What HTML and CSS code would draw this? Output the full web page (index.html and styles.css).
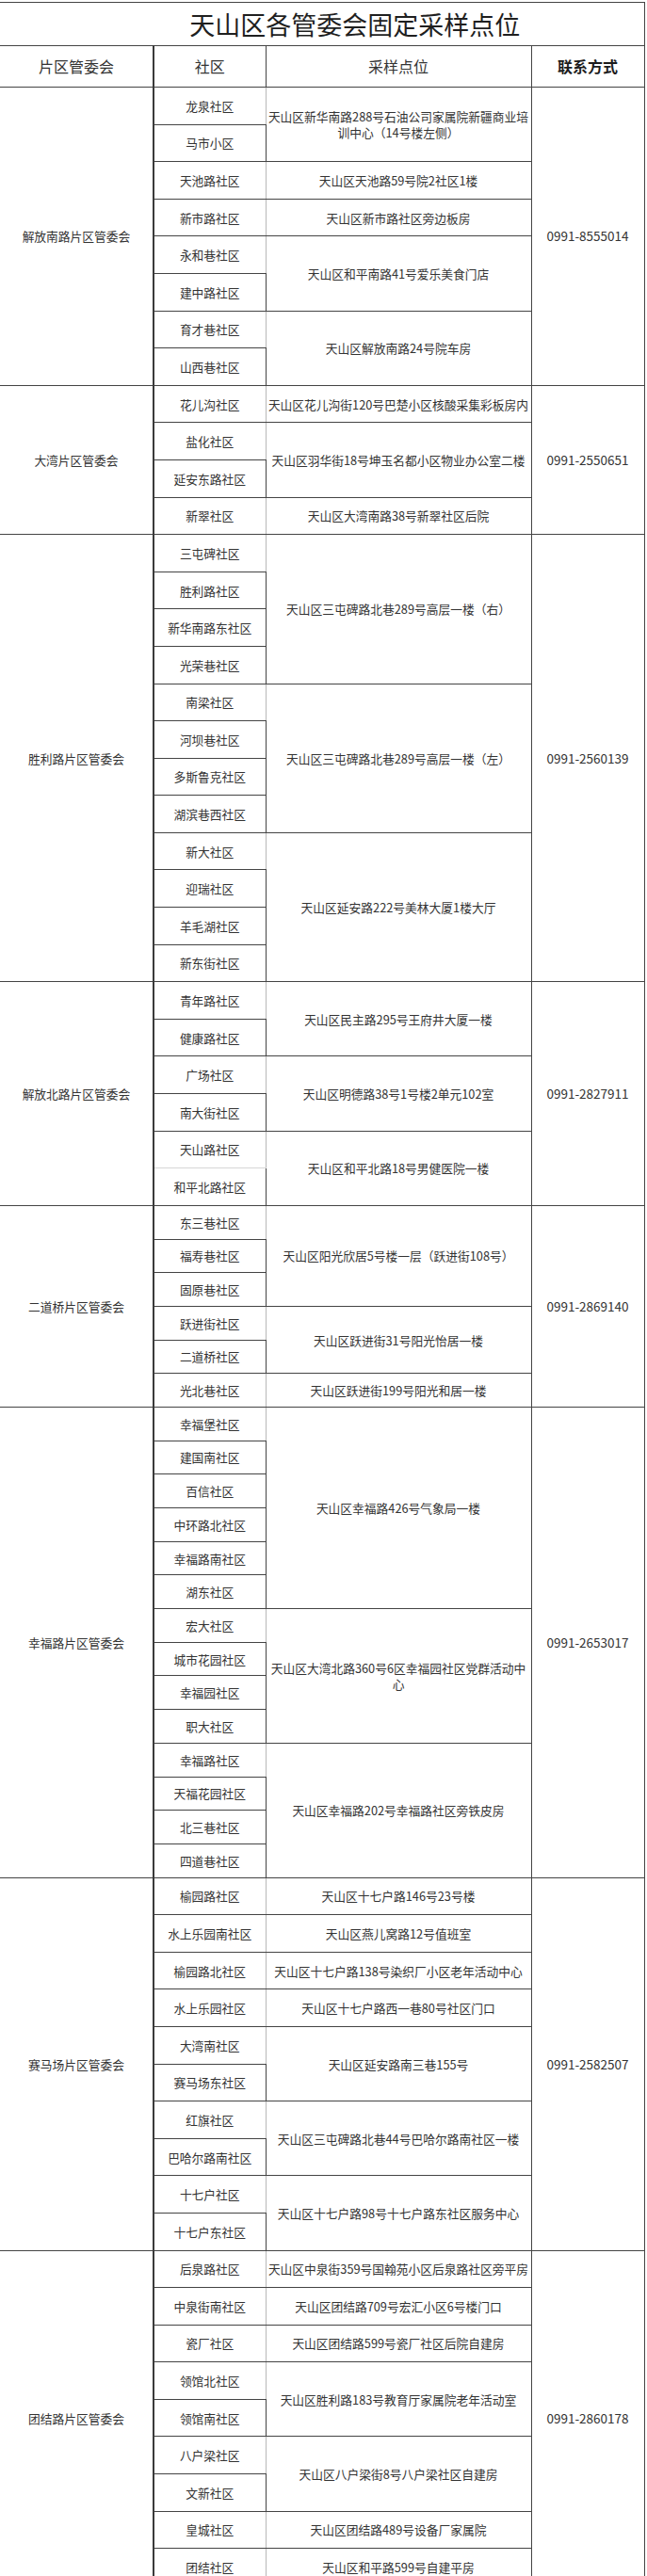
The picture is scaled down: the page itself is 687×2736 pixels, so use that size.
FILE: index.html
```html
<!DOCTYPE html>
<html lang="zh-CN">
<head>
<meta charset="utf-8">
<title>天山区各管委会固定采样点位</title>
<link rel="stylesheet" href="styles.css">
</head>
<body>
<table class="sheet">
  <colgroup>
    <col class="c-area"><col class="c-comm"><col class="c-site"><col class="c-tel">
  </colgroup>
  <thead>
    <tr class="title-row"><th colspan="4" class="title">天山区各管委会固定采样点位</th></tr>
    <tr class="head-row"><th class="area">片区管委会</th><th>社区</th><th>采样点位</th><th class="tel-h">联系方式</th></tr>
  </thead>

  <tbody class="grp">
    <tr class="r"><td class="area" rowspan="8">解放南路片区管委会</td><td class="comm">龙泉社区</td><td class="site" rowspan="2">天山区新华南路288号石油公司家属院新疆商业培训中心（14号楼左侧）</td><td class="tel" rowspan="8">0991-8555014</td></tr>
    <tr class="r"><td class="comm">马市小区</td></tr>
    <tr class="r"><td class="comm">天池路社区</td><td class="site">天山区天池路59号院2社区1楼</td></tr>
    <tr class="r"><td class="comm">新市路社区</td><td class="site">天山区新市路社区旁边板房</td></tr>
    <tr class="r"><td class="comm">永和巷社区</td><td class="site" rowspan="2">天山区和平南路41号爱乐美食门店</td></tr>
    <tr class="r"><td class="comm">建中路社区</td></tr>
    <tr class="r"><td class="comm">育才巷社区</td><td class="site" rowspan="2">天山区解放南路24号院车房</td></tr>
    <tr class="r"><td class="comm">山西巷社区</td></tr>
  </tbody>

  <tbody class="grp">
    <tr class="r"><td class="area" rowspan="4">大湾片区管委会</td><td class="comm">花儿沟社区</td><td class="site">天山区花儿沟街120号巴楚小区核酸采集彩板房内</td><td class="tel" rowspan="4">0991-2550651</td></tr>
    <tr class="r"><td class="comm">盐化社区</td><td class="site" rowspan="2">天山区羽华街18号坤玉名都小区物业办公室二楼</td></tr>
    <tr class="r"><td class="comm">延安东路社区</td></tr>
    <tr class="r"><td class="comm">新翠社区</td><td class="site">天山区大湾南路38号新翠社区后院</td></tr>
  </tbody>

  <tbody class="grp">
    <tr class="r"><td class="area" rowspan="12">胜利路片区管委会</td><td class="comm">三屯碑社区</td><td class="site" rowspan="4">天山区三屯碑路北巷289号高层一楼（右）</td><td class="tel" rowspan="12">0991-2560139</td></tr>
    <tr class="r"><td class="comm">胜利路社区</td></tr>
    <tr class="r"><td class="comm">新华南路东社区</td></tr>
    <tr class="r"><td class="comm">光荣巷社区</td></tr>
    <tr class="r"><td class="comm">南梁社区</td><td class="site" rowspan="4">天山区三屯碑路北巷289号高层一楼（左）</td></tr>
    <tr class="r"><td class="comm">河坝巷社区</td></tr>
    <tr class="r"><td class="comm">多斯鲁克社区</td></tr>
    <tr class="r"><td class="comm">湖滨巷西社区</td></tr>
    <tr class="r"><td class="comm">新大社区</td><td class="site" rowspan="4">天山区延安路222号美林大厦1楼大厅</td></tr>
    <tr class="r"><td class="comm">迎瑞社区</td></tr>
    <tr class="r"><td class="comm">羊毛湖社区</td></tr>
    <tr class="r"><td class="comm">新东街社区</td></tr>
  </tbody>

  <tbody class="grp">
    <tr class="r"><td class="area" rowspan="6">解放北路片区管委会</td><td class="comm">青年路社区</td><td class="site" rowspan="2">天山区民主路295号王府井大厦一楼</td><td class="tel" rowspan="6">0991-2827911</td></tr>
    <tr class="r"><td class="comm">健康路社区</td></tr>
    <tr class="r"><td class="comm">广场社区</td><td class="site" rowspan="2">天山区明德路38号1号楼2单元102室</td></tr>
    <tr class="r"><td class="comm">南大街社区</td></tr>
    <tr class="r"><td class="comm faint-b">天山路社区</td><td class="site" rowspan="2">天山区和平北路18号男健医院一楼</td></tr>
    <tr class="r"><td class="comm">和平北路社区</td></tr>
  </tbody>

  <tbody class="grp">
    <tr class="s"><td class="area" rowspan="6">二道桥片区管委会</td><td class="comm">东三巷社区</td><td class="site" rowspan="3">天山区阳光欣居5号楼一层（跃进街108号）</td><td class="tel" rowspan="6">0991-2869140</td></tr>
    <tr class="s"><td class="comm">福寿巷社区</td></tr>
    <tr class="s"><td class="comm">固原巷社区</td></tr>
    <tr class="s"><td class="comm">跃进街社区</td><td class="site" rowspan="2">天山区跃进街31号阳光怡居一楼</td></tr>
    <tr class="s"><td class="comm">二道桥社区</td></tr>
    <tr class="s"><td class="comm">光北巷社区</td><td class="site">天山区跃进街199号阳光和居一楼</td></tr>
  </tbody>

  <tbody class="grp">
    <tr class="s"><td class="area" rowspan="14">幸福路片区管委会</td><td class="comm">幸福堡社区</td><td class="site" rowspan="6">天山区幸福路426号气象局一楼</td><td class="tel" rowspan="14">0991-2653017</td></tr>
    <tr class="s"><td class="comm">建国南社区</td></tr>
    <tr class="s"><td class="comm">百信社区</td></tr>
    <tr class="s"><td class="comm">中环路北社区</td></tr>
    <tr class="s"><td class="comm">幸福路南社区</td></tr>
    <tr class="s"><td class="comm">湖东社区</td></tr>
    <tr class="s"><td class="comm">宏大社区</td><td class="site" rowspan="4">天山区大湾北路360号6区幸福园社区党群活动中心</td></tr>
    <tr class="s"><td class="comm">城市花园社区</td></tr>
    <tr class="s"><td class="comm">幸福园社区</td></tr>
    <tr class="s"><td class="comm">职大社区</td></tr>
    <tr class="s"><td class="comm">幸福路社区</td><td class="site" rowspan="4">天山区幸福路202号幸福路社区旁铁皮房</td></tr>
    <tr class="s"><td class="comm">天福花园社区</td></tr>
    <tr class="s"><td class="comm">北三巷社区</td></tr>
    <tr class="s"><td class="comm">四道巷社区</td></tr>
  </tbody>

  <tbody class="grp">
    <tr class="r"><td class="area" rowspan="10">赛马场片区管委会</td><td class="comm">榆园路社区</td><td class="site">天山区十七户路146号23号楼</td><td class="tel" rowspan="10">0991-2582507</td></tr>
    <tr class="r"><td class="comm">水上乐园南社区</td><td class="site">天山区燕儿窝路12号值班室</td></tr>
    <tr class="r"><td class="comm">榆园路北社区</td><td class="site">天山区十七户路138号染织厂小区老年活动中心</td></tr>
    <tr class="r"><td class="comm">水上乐园社区</td><td class="site">天山区十七户路西一巷80号社区门口</td></tr>
    <tr class="r"><td class="comm">大湾南社区</td><td class="site" rowspan="2">天山区延安路南三巷155号</td></tr>
    <tr class="r"><td class="comm">赛马场东社区</td></tr>
    <tr class="r"><td class="comm">红旗社区</td><td class="site" rowspan="2">天山区三屯碑路北巷44号巴哈尔路南社区一楼</td></tr>
    <tr class="r"><td class="comm">巴哈尔路南社区</td></tr>
    <tr class="r"><td class="comm">十七户社区</td><td class="site" rowspan="2">天山区十七户路98号十七户路东社区服务中心</td></tr>
    <tr class="r"><td class="comm">十七户东社区</td></tr>
  </tbody>

  <tbody class="grp">
    <tr class="r"><td class="area" rowspan="9">团结路片区管委会</td><td class="comm">后泉路社区</td><td class="site">天山区中泉街359号国翰苑小区后泉路社区旁平房</td><td class="tel" rowspan="9">0991-2860178</td></tr>
    <tr class="r"><td class="comm">中泉街南社区</td><td class="site">天山区团结路709号宏汇小区6号楼门口</td></tr>
    <tr class="r"><td class="comm">瓷厂社区</td><td class="site">天山区团结路599号瓷厂社区后院自建房</td></tr>
    <tr class="r"><td class="comm">领馆北社区</td><td class="site" rowspan="2">天山区胜利路183号教育厅家属院老年活动室</td></tr>
    <tr class="r"><td class="comm">领馆南社区</td></tr>
    <tr class="r"><td class="comm">八户梁社区</td><td class="site" rowspan="2">天山区八户梁街8号八户梁社区自建房</td></tr>
    <tr class="r"><td class="comm">文新社区</td></tr>
    <tr class="r"><td class="comm">皇城社区</td><td class="site">天山区团结路489号设备厂家属院</td></tr>
    <tr class="r"><td class="comm">团结社区</td><td class="site">天山区和平路599号自建平房</td></tr>
  </tbody>
</table>
</body>
</html>
```

FILE: styles.css
```css
html, body {
  margin: 0;
  padding: 0;
  background: #ffffff;
}

body {
  font-family: "Noto Sans CJK SC", "Noto Sans", sans-serif;
  color: #333333;
  padding-top: 2px;
}

.sheet {
  width: 684px;
  border-collapse: collapse;
  table-layout: fixed;
  border-top: 1px solid #444444;
}

.c-area { width: 163px; }
.c-comm { width: 119px; }
.c-site { width: 282px; }
.c-tel  { width: 120px; }

.sheet th,
.sheet td {
  border: 1px solid #444444;
  padding: 0;
  text-align: center;
  vertical-align: middle;
  font-size: 12.75px;
  line-height: 17px;
  font-weight: 400;
  color: #333333;
}

.sheet .site {
  padding: 0 1px;
}

.sheet .area {
  border-left: none;
  border-right: 2px solid #3a3a3a;
}

.title-row .title {
  height: 45px;
  font-size: 27px;
  line-height: 30px;
  color: #1f1f1f;
  padding-left: 70px;
  border-left: none;
}

.head-row th {
  height: 43px;
  font-size: 16px;
  color: #333333;
}

.head-row .area {
  border-right: 2px solid #3a3a3a;
}

.head-row .tel-h {
  font-weight: 700;
  color: #1c1c1c;
}

.r { height: 39.6px; }
.s { height: 35.7px; }

.sheet .comm {
  border-right-color: #b8b8b8;
}

.sheet .faint-b {
  border-bottom-color: #d6d6d6;
}

.sheet .tel {
  font-size: 13.5px;
}
```
